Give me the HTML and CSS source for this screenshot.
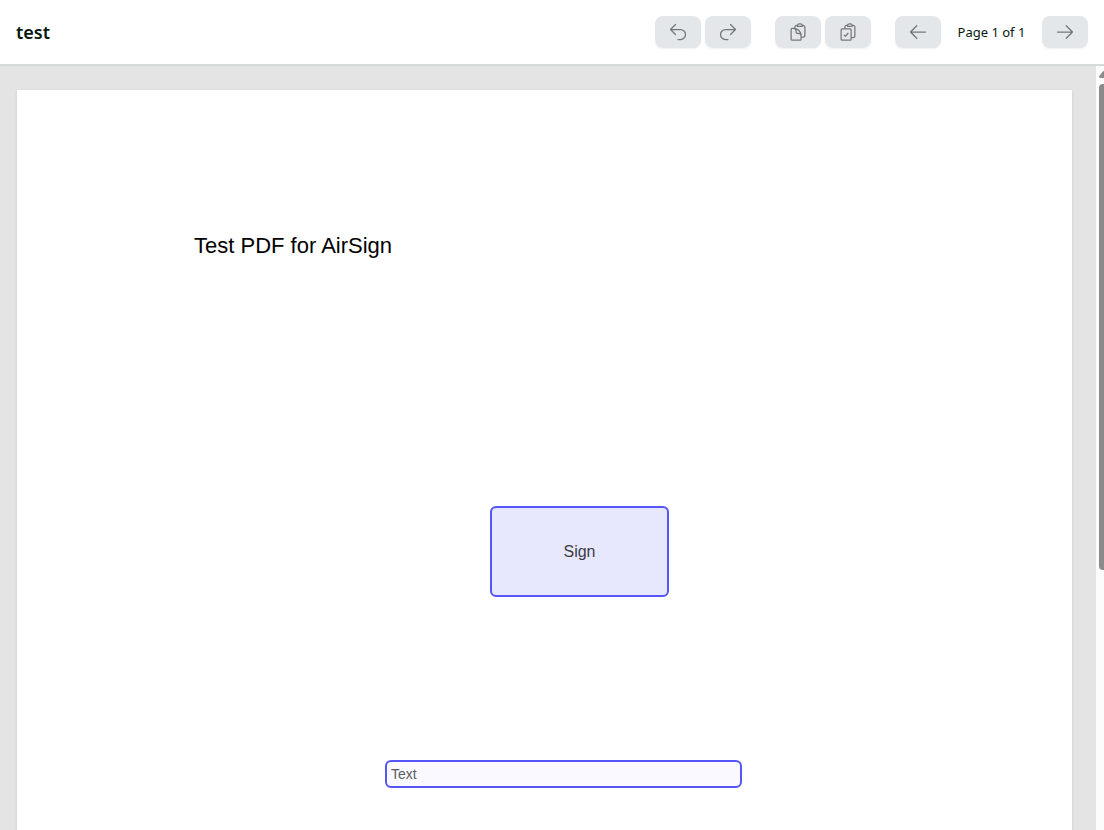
FILE: index.html
```html
<!DOCTYPE html>
<html lang="en">
<head>
<meta charset="UTF-8">
<meta name="viewport" content="width=device-width, initial-scale=1.0">
<title>test</title>
<link rel="stylesheet" href="styles.css">
</head>
<body>

<header class="toolbar">
    <h1>test</h1>
    <div class="actions">
        <div class="group">
            <button type="button" aria-label="Undo">
                <svg viewBox="0 0 24 24"><path d="M9 15 3 9m0 0 6-6M3 9h12a6 6 0 0 1 0 12h-3"/></svg>
            </button>
            <button type="button" aria-label="Redo">
                <svg viewBox="0 0 24 24"><path d="m15 15 6-6m0 0-6-6m6 6H9a6 6 0 0 0 0 12h3"/></svg>
            </button>
        </div>
        <div class="group">
            <button type="button" aria-label="Copy">
                <svg viewBox="0 0 24 24"><path d="M8.25 7.5V6.108c0-1.135.845-2.098 1.976-2.192.373-.03.748-.057 1.123-.08M15.75 18H18a2.25 2.25 0 0 0 2.25-2.25V6.108c0-1.135-.845-2.098-1.976-2.192a48.424 48.424 0 0 0-1.123-.08M15.75 18.75v-1.875a3.375 3.375 0 0 0-3.375-3.375h-1.5a1.125 1.125 0 0 1-1.125-1.125v-1.5A3.375 3.375 0 0 0 6.375 7.5H5.25m11.9-3.664A2.251 2.251 0 0 0 15 2.25h-1.5a2.251 2.251 0 0 0-2.15 1.586m5.8 0c.065.21.1.433.1.664v.75h-6V4.5c0-.231.035-.454.1-.664M6.75 7.5H4.875c-.621 0-1.125.504-1.125 1.125v12c0 .621.504 1.125 1.125 1.125h9.75c.621 0 1.125-.504 1.125-1.125V16.5a9 9 0 0 0-9-9Z"/></svg>
            </button>
            <button type="button" aria-label="Paste">
                <svg viewBox="0 0 24 24"><path d="M11.35 3.836c-.065.21-.1.433-.1.664 0 .414.336.75.75.75h4.5a.75.75 0 0 0 .75-.75 2.25 2.25 0 0 0-.1-.664m-5.8 0A2.251 2.251 0 0 1 13.5 2.25H15c1.012 0 1.867.668 2.15 1.586m-5.8 0c-.376.023-.75.05-1.124.08C9.095 4.01 8.25 4.973 8.25 6.108V8.25m8.9-4.414c.376.023.75.05 1.124.08 1.131.094 1.976 1.057 1.976 2.192V16.5A2.25 2.25 0 0 1 18 18.75h-2.25m-7.5-10.5H4.875c-.621 0-1.125.504-1.125 1.125v11.25c0 .621.504 1.125 1.125 1.125h9.75c.621 0 1.125-.504 1.125-1.125V18.75m-7.5-10.5h6.375c.621 0 1.125.504 1.125 1.125v9.375m-8.25-3 1.5 1.5 3-3.75"/></svg>
            </button>
        </div>
        <div class="group pager">
            <button type="button" aria-label="Previous page">
                <svg viewBox="0 0 24 24"><path d="M10.5 19.5 3 12m0 0 7.5-7.5M3 12h18"/></svg>
            </button>
            <span>Page 1 of 1</span>
            <button type="button" aria-label="Next page">
                <svg viewBox="0 0 24 24"><path d="M13.5 4.5 21 12m0 0-7.5 7.5M21 12H3"/></svg>
            </button>
        </div>
    </div>
</header>

<main class="viewer">
    <div class="document">
        <div class="page">
            <p>Test PDF for AirSign</p>
            <!-- fields sit freely on the page -->
            <button type="button" class="field sign-field">Sign</button>
            <input type="text" class="field text-field" placeholder="Text" aria-label="Text">
        </div>
    </div>
    <div class="scrollbar">
        <svg class="arrow" viewBox="0 0 10 7"><path d="M5 0q.8 0 1.4.8L9.6 5q1 2-.8 2H1.2q-1.800 0-.8-2L3.600.8Q4.200 0 5 0Z"/></svg>
        <div class="thumb"></div>
    </div>
</main>

</body>
</html>
```

FILE: styles.css
```css
* {
    box-sizing: border-box;
}

body {
    margin: 0;
    height: 100vh;
    display: flex;
    flex-direction: column;
    overflow: hidden;
    font-family: "Segoe UI", "Noto Sans", sans-serif;
    color: #04190f;
    background-color: #fff;
}

/* Toolbar */
.toolbar {
    display: flex;
    align-items: center;
    justify-content: space-between;
    flex-shrink: 0;
    padding: 16px;
    border-bottom: 2px solid #d6d9d9;
}

.toolbar h1 {
    margin: 0;
    font-size: 18px;
    line-height: 32px;
    font-weight: 600;
}

.actions {
    display: flex;
    gap: 24px;
}

.group {
    display: flex;
    align-items: center;
    gap: 4px;
}

.pager {
    gap: 16px;
    font-size: 13px;
}

.pager span {
    min-width: 69px;
    text-align: center;
}

.toolbar button {
    display: flex;
    align-items: center;
    justify-content: center;
    width: 46px;
    height: 32px;
    padding: 0;
    border: none;
    border-radius: 8px;
    background-color: #e4e7e9;
    color: #747779;
    box-shadow: 0 1px 2px rgba(0, 0, 0, 0.06);
    cursor: pointer;
}

.toolbar svg {
    width: 20px;
    height: 20px;
    fill: none;
    stroke: currentColor;
    stroke-width: 1.5;
    stroke-linecap: round;
    stroke-linejoin: round;
}

/* Viewer */
.viewer {
    display: flex;
    flex: 1;
    min-height: 0;
    background-color: #e4e4e4;
}

.document {
    flex: 1;
    overflow: hidden;
    padding: 24px 24px 24px 17px;
}

.page {
    position: relative;
    height: 1120px;
    background-color: #fff;
    box-shadow: 0 1px 3px rgba(0, 0, 0, 0.12);
    font-family: Arial, "Liberation Sans", sans-serif;
}

.page p {
    margin: 0;
    padding: 144px 0 0 177px;
    font-size: 22px;
    line-height: 24px;
    color: #000;
}

.field {
    position: absolute;
    border: 2px solid #5656f8;
    border-radius: 6px;
    font-family: inherit;
}

.sign-field {
    left: 473px;
    top: 416px;
    width: 179px;
    height: 91px;
    background-color: #e7e7fe;
    color: #3c3c42;
    font-size: 16px;
    cursor: pointer;
}

.text-field {
    left: 368px;
    top: 670px;
    width: 357px;
    height: 28px;
    padding: 0 4px;
    background-color: #f9f9ff;
    font-size: 14px;
}

.text-field::placeholder {
    color: #5c5c62;
}

/* Scrollbar runs off the right edge */
.scrollbar {
    width: 15px;
    margin-right: -7px;
    padding: 5px 3px 0;
    background-color: #fcfcfc;
}

.arrow {
    display: block;
    width: 10px;
    height: 7px;
    fill: #8b8b8b;
}

.thumb {
    width: 9px;
    height: 64%;
    margin-top: 6px;
    border-radius: 4px;
    background-color: #8b8b8b;
}
```
